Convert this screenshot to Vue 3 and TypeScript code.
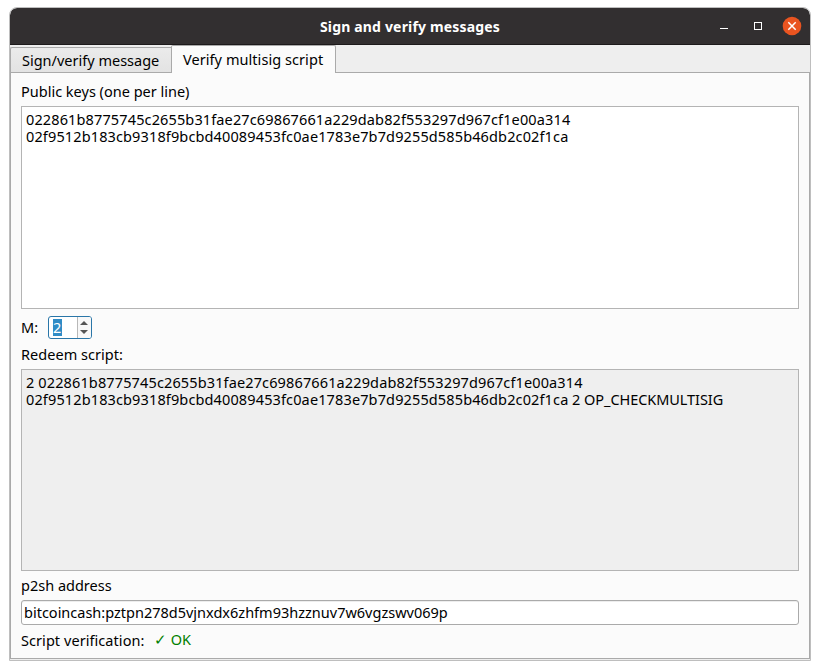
<script setup lang="ts">
import { computed, ref } from 'vue'

const tabs = ['Sign/verify message', 'Verify multisig script']
const active = ref(1)
const keys = ref([
  '022861b8775745c2655b31fae27c69867661a229dab82f553297d967cf1e00a314',
  '02f9512b183cb9318f9bcbd40089453fc0ae1783e7b7d9255d585b46db2c02f1ca',
])
const required = ref(2)
const address = ref('bitcoincash:pztpn278d5vjnxdx6zhfm93hzznuv7w6vgzswv069p')
const opcodes = computed(() => ` ${keys.value.length} OP_CHECKMULTISIG`)

function step(delta: number) {
  required.value = Math.min(keys.value.length, Math.max(1, required.value + delta))
}
</script>

<template>
  <main class="desktop">
    <section class="window">
      <header class="titlebar">
        <h1 class="title">Sign and verify messages</h1>
        <svg class="controls" width="90" height="20" viewBox="0 0 90 20">
          <path d="M8 12.5h8" stroke="#fff" fill="none" />
          <rect x="42.5" y="6.5" width="7" height="7" fill="none" stroke="#fff" />
          <circle cx="80" cy="10" r="9.3" fill="#e95420" />
          <path d="M76.3 6.3l7.4 7.4M83.7 6.3l-7.4 7.4" stroke="#fff" stroke-width="1.5" fill="none" />
        </svg>
      </header>

      <nav class="tabs">
        <button
          v-for="(tab, i) in tabs"
          :key="tab"
          class="tab"
          :class="{ active: i === active }"
          @click="active = i"
        >{{ tab }}</button>
      </nav>

      <div class="pane">
        <div class="label">Public keys (one per line)</div>
        <div class="box keys">
          <div v-for="key in keys" :key="key" class="hex">{{ key }}</div>
        </div>

        <div class="row">
          <span class="m-label">M:</span>
          <div class="spin">
            <div class="spin-value"><span class="selected">{{ required }}</span></div>
            <div class="steps">
              <button class="step" @click="step(1)">
                <svg width="8" height="4" viewBox="0 0 8 4"><path d="M0 4L4 0l4 4z" fill="#555" /></svg>
              </button>
              <button class="step" @click="step(-1)">
                <svg width="8" height="4" viewBox="0 0 8 4"><path d="M0 0l4 4 4-4z" fill="#555" /></svg>
              </button>
            </div>
          </div>
        </div>

        <div class="label loose">Redeem script:</div>
        <div class="box script">
          <div class="hex">{{ required }} {{ keys[0] }}</div>
          <div><span class="hex">{{ keys[1] }}</span><span class="ops">{{ opcodes }}</span></div>
        </div>

        <div class="label">p2sh address</div>
        <div class="address">{{ address }}</div>

        <div class="result">
          <span class="result-label">Script verification:</span>
          <span class="ok">✓ OK</span>
        </div>
      </div>
    </section>
  </main>
</template>

<style scoped>
.desktop {
  padding: 7px 9px;
  color: #000;
  font: 14.5px/17px "Noto Sans", sans-serif;
}
.window {
  box-sizing: border-box;
  width: 802px;
  height: 654px;
  display: flex;
  flex-direction: column;
  overflow: hidden;
  border: 1px solid #bebebe;
  border-radius: 8px 8px 0 0;
  background: #eee;
}
.titlebar {
  box-sizing: border-box;
  height: 37px;
  display: grid;
  grid-template-columns: 90px 1fr 90px;
  align-items: center;
  border-bottom: 1px solid #1d1a1b;
  border-radius: 7px 7px 0 0;
  background: #322f30;
  padding-right: 8px;
  padding-left: 8px;
}
.title {
  grid-column: 2;
  margin: 1px 0 0;
  color: #fff;
  font-size: 14px;
  line-height: 17px;
  font-weight: 700;
  letter-spacing: 0.17px;
  text-align: center;
}
.controls { display: block; }
.tabs {
  height: 28px;
  display: flex;
  align-items: flex-end;
  flex: none;
  margin-bottom: -1px;
}
.tab {
  box-sizing: border-box;
  width: 161px;
  height: 26px;
  margin: 0;
  padding: 1px 0 0 11px;
  border: 1px solid #aaa;
  border-right: 0;
  border-radius: 2px 0 0 0;
  background: linear-gradient(#ebebeb, #e3e3e3);
  color: #000;
  font: inherit;
  line-height: 17px;
  text-align: left;
  white-space: nowrap;
}
.tab.active {
  position: relative;
  width: 165px;
  height: 28px;
  border-right: 1px solid #aaa;
  border-bottom: 0;
  border-radius: 2px 2px 0 0;
  background: #fbfbfb;
  padding-bottom: 1px;
  letter-spacing: 0.06px;
}
.pane {
  box-sizing: border-box;
  height: 587px;
  display: flex;
  flex-direction: column;
  border: 1px solid #aaa;
  background: #fbfbfb;
  padding: 10px 10px 0;
}
.label { margin-bottom: 6px; }
.loose {
  margin-top: 7px;
  letter-spacing: 0.04px;
}
.box {
  box-sizing: border-box;
  flex: none;
  border: 1px solid #b4b4b4;
  padding: 4px;
  white-space: nowrap;
}
.keys {
  height: 203px;
  background: #fff;
}
.script {
  height: 202px;
  margin-bottom: 6px;
  background: #efefef;
}
.hex { letter-spacing: 0.13px; }
.ops {
  letter-spacing: -0.06px;
  white-space: pre;
}
.row {
  height: 23px;
  display: flex;
  align-items: center;
  margin-top: 7px;
}
.m-label { width: 27px; }
.spin {
  box-sizing: border-box;
  width: 44px;
  height: 23px;
  display: flex;
  border: 1px solid #2a76a8;
  border-radius: 3px;
  background: #fff;
  overflow: hidden;
}
.spin-value {
  flex: 1;
  padding: 2px 0 0 4px;
}
.selected {
  display: block;
  width: 9px;
  background: #308cc6;
  color: #fff;
}
.steps {
  box-sizing: border-box;
  width: 14px;
  display: flex;
  flex-direction: column;
  border-left: 1px solid #b8b8b8;
  background: #f8f8f8;
  padding: 1px 1px 1px 0;
}
.step {
  flex: 1;
  display: flex;
  align-items: center;
  justify-content: center;
  border: 0;
  padding: 0;
  background: none;
}
.address {
  box-sizing: border-box;
  height: 25px;
  border: 1px solid #aaa;
  border-radius: 3px;
  background: #fff;
  box-shadow: inset 0 1px #ededed;
  padding: 3px 2px;
}
.result {
  display: flex;
  align-items: flex-start;
  margin-top: 6px;
}
.result-label {
  width: 133px;
  padding-top: 1px;
  letter-spacing: 0.06px;
}
.ok {
  color: #008000;
}
</style>
<style>
body { margin: 0; background: #fff; }
</style>
